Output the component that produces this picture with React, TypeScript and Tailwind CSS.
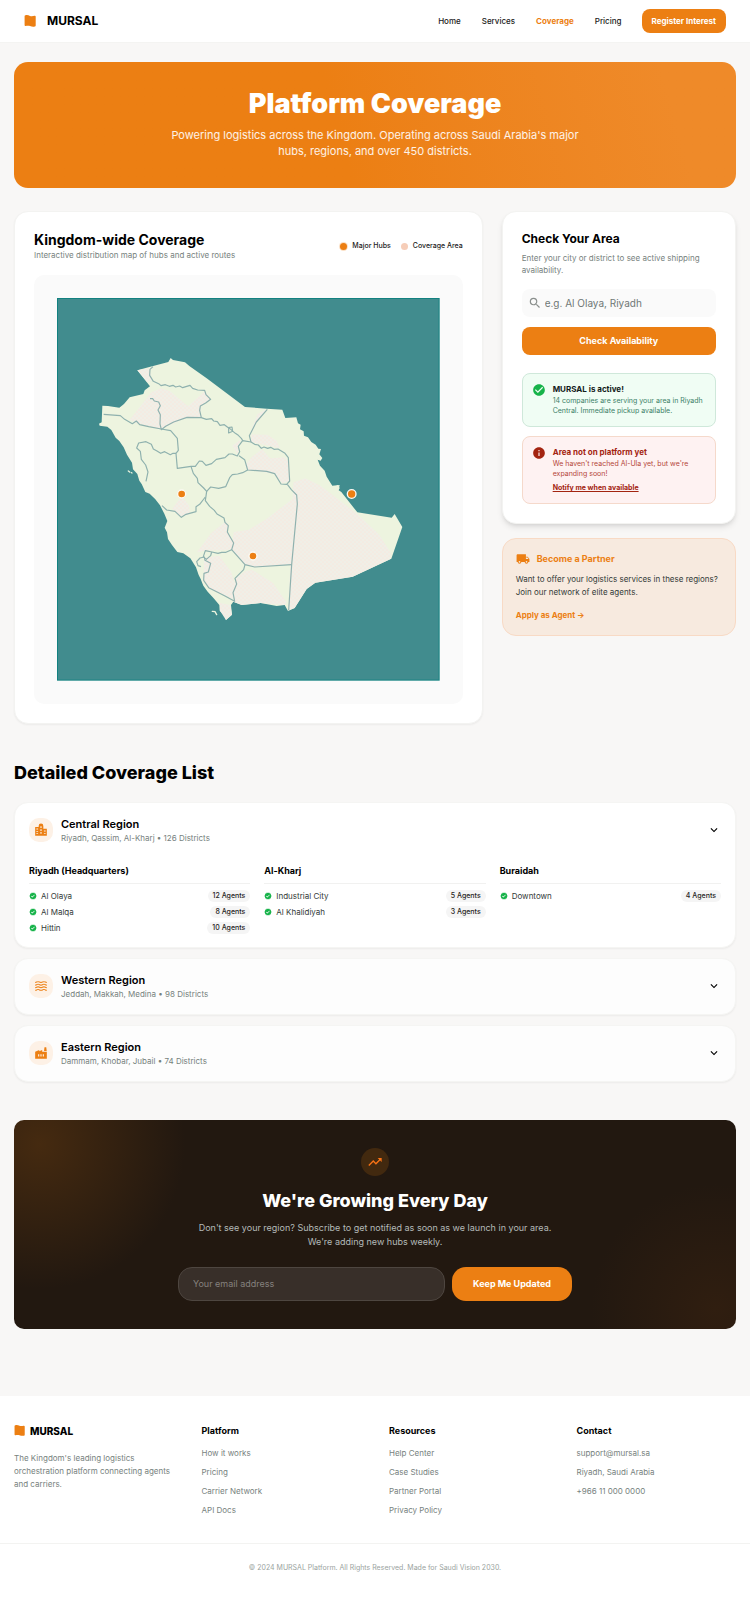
import { useState } from "react";
import type { ReactNode } from "react";
import {
  MdCheckCircle,
  MdExpandMore,
  MdFactory,
  MdInfo,
  MdLocalShipping,
  MdSearch,
  MdTrendingUp,
  MdVerified,
  MdWaves,
} from "react-icons/md";

type City = { name: string; districts: { name: string; agents: number }[] };
type Region = { name: string; summary: string; icon: ReactNode; cities: City[] };

function FlagIcon({ className }: { className: string }) {
  return (
    <svg viewBox="0 0 12 12" className={className} fill="currentColor" aria-hidden="true">
      <path d="M0.6 1C0.6 0.5 1 0.2 1.5 0.2C3.4 -0.2 4.6 0.3 6 0.9C7.6 1.4 9 1.1 10.6 0.8C11.2 0.7 11.7 1 11.7 1.6V10.6C11.7 11.2 11.4 11.5 10.8 11.6C9 12 7.6 11.7 6 11.1C4.500 10.6 3.100 10.8 1.600 11.100C1 11.200 0.600 10.900 0.600 10.300Z" />
    </svg>
  );
}

function CityIcon() {
  return (
    <svg viewBox="0 0 24 24" className="size-3.5" fill="currentColor" aria-hidden="true">
      <path
        fillRule="evenodd"
        d="M2 7h6V5a4 4 0 0 1 8 0v5h6v12H2zM4 9.500h3v1.500H4zm0 4h3v1.500H4zm0 4h3v1.500H4zM11 5.500h2v3h-2zm0 5h2v3h-2zm0 5h2v3h-2zM17 13h3v1.500h-3zm0 4h3v1.500h-3z"
      />
    </svg>
  );
}

const navLinks = ["Home", "Services", "Coverage", "Pricing"];

const regions: Region[] = [
  {
    name: "Central Region",
    summary: "Riyadh, Qassim, Al-Kharj • 126 Districts",
    icon: <CityIcon />,
    cities: [
      {
        name: "Riyadh (Headquarters)",
        districts: [
          { name: "Al Olaya", agents: 12 },
          { name: "Al Malqa", agents: 8 },
          { name: "Hittin", agents: 10 },
        ],
      },
      {
        name: "Al-Kharj",
        districts: [
          { name: "Industrial City", agents: 5 },
          { name: "Al Khalidiyah", agents: 3 },
        ],
      },
      { name: "Buraidah", districts: [{ name: "Downtown", agents: 4 }] },
    ],
  },
  {
    name: "Western Region",
    summary: "Jeddah, Makkah, Medina • 98 Districts",
    icon: <MdWaves className="size-3.5" />,
    cities: [],
  },
  {
    name: "Eastern Region",
    summary: "Dammam, Khobar, Jubail • 74 Districts",
    icon: <MdFactory className="size-3.5" />,
    cities: [],
  },
];

const footerColumns = [
  { title: "Platform", links: ["How it works", "Pricing", "Carrier Network", "API Docs"] },
  { title: "Resources", links: ["Help Center", "Case Studies", "Partner Portal", "Privacy Policy"] },
  { title: "Contact", links: ["support@mursal.sa", "Riyadh, Saudi Arabia", "+966 11 000 0000"] },
];

function Header() {
  return (
    <header className="flex items-center justify-between border-b border-[#f4f4f2] bg-white px-6 py-[9px]">
      <a href="#home" className="flex items-center gap-[11px] text-black">
        <FlagIcon className="size-3 text-[#ec7f13]" />
        <span className="text-[12px] leading-4 font-bold">MURSAL</span>
      </a>
      <div className="flex items-center gap-5">
        <nav className="flex items-center gap-[21px] text-[8px] leading-3 font-medium text-[#1a1a1a]">
          {navLinks.map((label) => (
            <a
              key={label}
              href={`#${label.toLowerCase()}`}
              className={label === "Coverage" ? "font-bold text-[#ec7f13]" : ""}
            >
              {label}
            </a>
          ))}
        </nav>
        <button type="button" className="h-6 rounded-lg bg-[#ec7f13] px-2.5 text-[8px] leading-3 font-bold text-white">
          Register Interest
        </button>
      </div>
    </header>
  );
}

function Hero() {
  return (
    <section className="rounded-[14px] bg-linear-75 from-[#ec7f13] from-45% to-[#ef8a29] to-90% px-6 pt-6 pb-7 text-center text-white">
      <h1 className="text-[27px] leading-9 font-black">Platform Coverage</h1>
      <p className="mx-auto mt-[5px] max-w-[410px] pb-px text-[11px] leading-4 text-white/90">
        Powering logistics across the Kingdom. Operating across Saudi Arabia's major hubs, regions, and over 450
        districts.
      </p>
    </section>
  );
}

const coast =
  "M262 244L298 234L355 219L362 207L369 213L405 220L418 231L470 268L585 354L650 359L697 362L706 387L739 385L744 403L752 407L750 421L761 427L762 440L774 445L784 459L797 467L805 479L813 480L808 496L817 507L812 515L803 512L810 530L824 545L830 563L847 590L869 588L866 604L874 609L922 670L1025 686L1034 675L1057 714L1024 809L908 863L796 881L770 900L734 957L714 966L704 948L680 951L632 942L575 948L550 938L543 948L546 977L528 993L522 978L509 965L508 948L491 928L473 908L460 890L452 870L446 858L438 835L421 808L400 793L382 789L366 768L354 750L351 730L344 716L352 696L343 674L330 649L316 631L299 614L286 609L275 585L268 575L262 555L249 541L246 521L231 497L221 475L208 456L197 446L184 423L172 413L149 410L147 404L155 400L157 350L174 351L208 356L222 345L239 325L280 315L284 304L300 292Z";

const borders = [
  "M309 233L300 241L299 259L310 277L326 284L333 290L346 287L358 292L369 289L377 294L389 291L398 296L420 289L428 298L443 303L464 304L468 317L482 331L467 342L451 351L449 364L454 386",
  "M300 329L308 329L313 336L326 339L331 350L324 363L331 377L330 405L334 422L347 412L371 399L411 385L454 386L469 391L485 389L491 396L502 398L510 409L523 407L535 416L546 414L548 427L536 432L536 416L556 433L565 439L574 448L578 455",
  "M161 376L211 380L224 391L247 404L259 396L269 407L296 413L334 420L362 425L382 448L385 484L378 493L382 538L423 532L436 532L448 516L457 517L468 529L485 524L499 511L525 506L537 495L547 495L562 501L569 488L565 472L578 455L603 459L614 466L625 468L634 478L642 474L653 478L662 475L672 481L684 480L705 493L715 506L719 576L710 586L693 585L674 554L650 547L593 543L584 512L567 500",
  "M378 493L369 493L361 497L344 488L332 493L321 486L310 480L304 466L288 458L266 462L260 477L271 487L274 511L287 528L294 549L288 577",
  "M652 361L619 399L598 440L603 459",
  "M423 532L430 553L442 568L444 581L461 597L470 607L466 635L479 652L493 664L501 675L522 687L525 700L535 710L532 729L551 762L545 782L528 790L515 790L504 793L486 789L466 785L460 803L469 811L482 800L485 789",
  "M593 543L578 551L563 555L547 557L539 566L527 593L506 598L482 594L470 607",
  "M336 650L350 663L375 667L394 685L408 676L438 668L438 653L449 646L466 624",
  "M712 586L724 602L740 618L742 645L725 827L716 964",
  "M545 782L561 800L585 827L614 834L725 827",
  "M585 827L581 842L555 868L560 885L549 911L554 937L525 921L503 910L476 896L461 874L462 853L475 849L482 823L465 814L463 804L450 807L440 818L444 830L453 833",
];

const shadedAreas = [
  "M239 392L304 310L333 298L361 307L414 352L465 306L482 331L451 351L454 386L411 385L334 420L259 402Z",
  "M262 244L298 238L305 274L292 280Z",
  "M650 360L619 399L604 436L652 437L680 455L690 478L603 459L606 420L622 376Z",
  "M586 529L605 504L636 480L660 508L704 505L715 518L717 577L697 583L674 554L593 543Z",
  "M547 470L571 452L563 496Z",
  "M395 621L418 650L419 675L392 682L367 659Z",
  "M441 790L483 733L528 697L535 710L532 729L551 762L545 782L466 785Z",
  "M551 729L596 722L648 691L738 622L725 827L614 834L585 827L545 782Z",
  "M730 580L766 568L812 590L922 675L988 737L1023 792L1020 811L908 863L796 881L770 900L734 957L716 964Z",
  "M462 806L508 800L544 849L555 885L549 930L476 896L461 874Z",
  "M555 868L589 845L608 843L669 882L710 940L704 948L632 942L575 948L550 938Z",
  "M510 942L541 948L546 977L528 993L510 965Z",
];

function KingdomMap() {
  return (
    <svg viewBox="21 27 1148 1148" className="block w-full" role="img" aria-label="Map of coverage regions">
      <defs>
        <pattern id="shade" width="12" height="12" patternUnits="userSpaceOnUse">
          <rect width="12" height="12" fill="#f3f0e7" />
          <circle cx="3" cy="3" r="1.800" fill="#f8ddd4" />
          <circle cx="9" cy="9" r="1.800" fill="#f8ddd4" />
          <circle cx="9" cy="3" r="1.300" fill="#dfeee7" />
          <circle cx="3" cy="9" r="1.300" fill="#dfeee7" />
        </pattern>
      </defs>
      <rect x="21" y="27" width="1148" height="1148" fill="#128180" />
      <rect x="24" y="30" width="1142" height="1142" fill="#418c8e" />
      <path d={coast} fill="#edf4df" strokeLinejoin="round" />
      {shadedAreas.map((d) => (
        <path key={d} d={d} fill="url(#shade)" />
      ))}
      <g fill="none" stroke="#8fb1ae" strokeWidth="3.500" strokeLinejoin="round">
        {borders.map((d) => (
          <path key={d} d={d} />
        ))}
      </g>
      <g fill="none" stroke="#edf4df" strokeWidth="4" strokeLinecap="round">
        <path d="M487 967L495 968L500 977M235 546L239 549M244 551L246 552M862 590L861 603M867 597L862 604" />
      </g>
      {[
        { x: 395, y: 615, r: 14 },
        { x: 609, y: 801, r: 14 },
        { x: 905, y: 615, r: 15 },
      ].map((hub) => (
        <circle key={hub.x} cx={hub.x} cy={hub.y} r={hub.r - 2} fill="#ec7f13" stroke="#fdfaf3" strokeWidth="4" />
      ))}
    </svg>
  );
}

function MapCard() {
  return (
    <section className="rounded-[14px] border border-[#f3f3f1] bg-white p-[19px] shadow-xs">
      <div className="flex items-center justify-between pb-3.5">
        <div>
          <h2 className="text-[14px] leading-[18px] font-bold text-black">Kingdom-wide Coverage</h2>
          <p className="text-[8px] leading-3 text-[#77827e]">Interactive distribution map of hubs and active routes</p>
        </div>
        <ul className="flex gap-2.5 text-[7px] leading-[10px] font-medium text-[#1a1a1a]">
          <li className="flex items-center gap-[5px]">
            <span className="size-[7px] rounded-full bg-[#ec7f13] ring-1 ring-[#fbe0c6]" />
            Major Hubs
          </li>
          <li className="flex items-center gap-[5px]">
            <span className="size-[7px] rounded-full bg-[#f6cdb8]" />
            Coverage Area
          </li>
        </ul>
      </div>
      <div className="rounded-[10px] bg-[#fafafa] p-[23px]">
        <KingdomMap />
      </div>
    </section>
  );
}

function AreaCheck() {
  return (
    <section className="rounded-[14px] border border-[#f3f3f1] bg-white p-[19px] shadow-md">
      <h2 className="text-[12px] leading-4 font-bold text-black">Check Your Area</h2>
      <p className="mt-[5px] text-[8px] leading-3 text-[#77827e]">
        Enter your city or district to see active shipping availability.
      </p>
      <form className="mt-[13px] flex flex-col gap-2.5" onSubmit={(event) => event.preventDefault()}>
        <div className="flex h-7 items-center gap-[3px] rounded-lg bg-[#fafafa] px-1.5">
          <MdSearch className="size-3.5 shrink-0 text-[#8a8f8d]" aria-hidden="true" />
          <input
            type="text"
            aria-label="City or district"
            placeholder="e.g. Al Olaya, Riyadh"
            className="h-full w-full min-w-0 bg-transparent text-[10px] leading-4 outline-none placeholder:text-[#6f7876]"
          />
        </div>
        <button type="submit" className="h-7 rounded-lg bg-[#ec7f13] text-[9px] leading-3 font-bold text-white">
          Check Availability
        </button>
      </form>
      <div className="mt-[18px] flex gap-[7px] rounded-lg border border-[#cfe8da] bg-[#f0fdf4] px-[9px] py-[9px]">
        <MdCheckCircle className="size-3.5 shrink-0 text-[#17b34a]" aria-hidden="true" />
        <div>
          <h3 className="text-[8px] leading-3 font-bold text-[#12201a]">MURSAL is active!</h3>
          <p className="mt-px pb-px text-[7px] leading-[10px] text-[#3b7f67]">
            14 companies are serving your area in Riyadh Central. Immediate pickup available.
          </p>
        </div>
      </div>
      <div className="mt-[9px] flex gap-[7px] rounded-lg border border-[#f5d9cb] bg-[#fef2f2] px-[9px] py-[9px]">
        <MdInfo className="size-3.5 shrink-0 text-[#a32410]" aria-hidden="true" />
        <div>
          <h3 className="text-[8px] leading-3 font-bold text-[#a32410]">Area not on platform yet</h3>
          <p className="mt-px text-[7px] leading-[10px] text-[#b5473a]">
            We haven't reached Al-Ula yet, but we're expanding soon!
          </p>
          <button type="button" className="mt-1 block pb-px text-[7px] leading-[10px] font-bold text-[#a32410] underline">
            Notify me when available
          </button>
        </div>
      </div>
    </section>
  );
}

function PartnerCard() {
  return (
    <section className="rounded-[14px] border border-[#f8dac5] bg-[#f7eadf] px-[13px] pt-3 pb-[11px]">
      <h2 className="flex items-center gap-[7px] text-[9px] leading-4 font-bold text-[#ec7f13]">
        <MdLocalShipping className="size-3.5" aria-hidden="true" />
        Become a Partner
      </h2>
      <p className="mt-1.5 text-[8px] leading-[13px] text-[#333a38]">
        Want to offer your logistics services in these regions? Join our network of elite agents.
      </p>
      <a href="#apply" className="mt-2.5 inline-block text-[8px] leading-3 font-bold text-[#ec7f13]">
        Apply as Agent →
      </a>
    </section>
  );
}

function RegionCard({ region, startOpen }: { region: Region; startOpen: boolean }) {
  const [open, setOpen] = useState(startOpen);
  return (
    <article
      className={`rounded-[14px] border border-[#f5f5f3] px-3.5 py-[13px] shadow-xs ${open ? "bg-white" : "bg-[#fdfdfd]"}`}
    >
      <h3>
        <button
          type="button"
          aria-expanded={open}
          onClick={() => setOpen(!open)}
          className="flex w-full items-center gap-2 text-left"
        >
          <span className="flex size-6 items-center justify-center rounded-[10px] bg-[#fdf1e6] text-[#ec7f13]">
            {region.icon}
          </span>
          <span className="flex-1">
            <span className="block text-[11px] leading-4 font-semibold text-black">{region.name}</span>
            <span className="block pb-px text-[8px] leading-3 font-normal text-[#77827e]">{region.summary}</span>
          </span>
          <MdExpandMore className="size-3.5 text-black" aria-hidden="true" />
        </button>
      </h3>
      {open && region.cities.length > 0 && (
        <div className="grid grid-cols-3 gap-3.5 pt-5">
          {region.cities.map((city) => (
            <div key={city.name}>
              <h4 className="border-b border-[#f1f1f0] pb-1.5 text-[9px] leading-3 font-bold text-black">
                {city.name}
              </h4>
              <ul className="flex flex-col gap-1 pt-1.5">
                {city.districts.map((district) => (
                  <li key={district.name} className="flex items-center gap-1 text-[8px] leading-3 text-[#333a38]">
                    <MdVerified className="size-2 shrink-0 text-[#17b34a]" aria-hidden="true" />
                    <span className="flex-1">{district.name}</span>
                    <span className="rounded-full bg-[#f5f5f5] px-[5px] text-[7px] leading-3 font-medium text-[#1f2423]">
                      {district.agents} Agents
                    </span>
                  </li>
                ))}
              </ul>
            </div>
          ))}
        </div>
      )}
    </article>
  );
}

function Newsletter() {
  return (
    <section className="mt-[38px] rounded-[10px] bg-[#221810] bg-[radial-gradient(circle_at_26px_24px,#452a0e_0px,#221810_145px),radial-gradient(circle_at_calc(100%-20px)_calc(100%-20px),#301e10_0px,#22181000_125px)] bg-blend-lighten px-6 pt-7 pb-7 text-center">
      <span className="mx-auto flex size-7 items-center justify-center rounded-full bg-[#42290f] text-[#f97316]">
        <MdTrendingUp className="size-4" aria-hidden="true" />
      </span>
      <h2 className="mt-[13px] text-[18px] leading-6 font-extrabold text-white">We're Growing Every Day</h2>
      <p className="mx-auto mt-2 max-w-[372px] text-[9px] leading-3.5 text-[#b4bab9]">
        Don't see your region? Subscribe to get notified as soon as we launch in your area. We're adding new hubs
        weekly.
      </p>
      <form
        className="mx-auto mt-[18px] flex max-w-[394px] gap-[7px]"
        onSubmit={(event) => event.preventDefault()}
      >
        <input
          type="email"
          aria-label="Your email address"
          placeholder="Your email address"
          className="h-[34px] min-w-0 flex-1 rounded-[14px] border border-[#4e4640] bg-[#382f29] px-3.5 text-[9px] leading-4 text-white outline-none placeholder:text-[#85817e]"
        />
        <button type="submit" className="h-[34px] rounded-[14px] bg-[#ec7f13] px-[21px] text-[9px] leading-3 font-bold text-white">
          Keep Me Updated
        </button>
      </form>
    </section>
  );
}

function Footer() {
  return (
    <footer className="bg-white">
      <div className="grid grid-cols-4 gap-7 px-3.5 pt-[27px] pb-[27px]">
        <div>
          <div className="flex items-center gap-[5px] text-black">
            <FlagIcon className="size-[11px] text-[#ec7f13]" />
            <span className="text-[10px] leading-4 font-extrabold">MURSAL</span>
          </div>
          <p className="mt-[13px] text-[8px] leading-[13px] text-[#77827e]">
            The Kingdom's leading logistics orchestration platform connecting agents and carriers.
          </p>
        </div>
        {footerColumns.map((column) => (
          <div key={column.title}>
            <h3 className="text-[9px] leading-4 font-bold text-black">{column.title}</h3>
            <ul className="mt-2 flex flex-col gap-[7px] text-[8px] leading-3 text-[#77827e]">
              {column.links.map((link) => (
                <li key={link}>
                  <a href="#footer" className="block">{link}</a>
                </li>
              ))}
            </ul>
          </div>
        ))}
      </div>
      <p className="border-t border-[#f3f3f1] pt-[18px] pb-[26px] text-center text-[7px] leading-3 text-[#9aa3a0]">
        © 2024 MURSAL Platform. All Rights Reserved. Made for Saudi Vision 2030.
      </p>
    </footer>
  );
}

export default function App() {
  return (
    <div className="min-h-screen bg-[#f8f7f6] font-[Inter,sans-serif]">
      <Header />
      <main className="px-3.5 pt-[19px] pb-[67px]">
        <Hero />
        <div className="mt-[23px] grid grid-cols-[2fr_1fr] items-start gap-[19px]">
          <MapCard />
          <aside className="flex flex-col gap-3.5">
            <AreaCheck />
            <PartnerCard />
          </aside>
        </div>
        <h2 className="mt-[37px] mb-[17px] text-[18px] leading-6 font-extrabold text-black">Detailed Coverage List</h2>
        <div className="flex flex-col gap-2.5">
          {regions.map((region, index) => (
            <RegionCard key={region.name} region={region} startOpen={index === 0} />
          ))}
        </div>
        <Newsletter />
      </main>
      <Footer />
    </div>
  );
}
